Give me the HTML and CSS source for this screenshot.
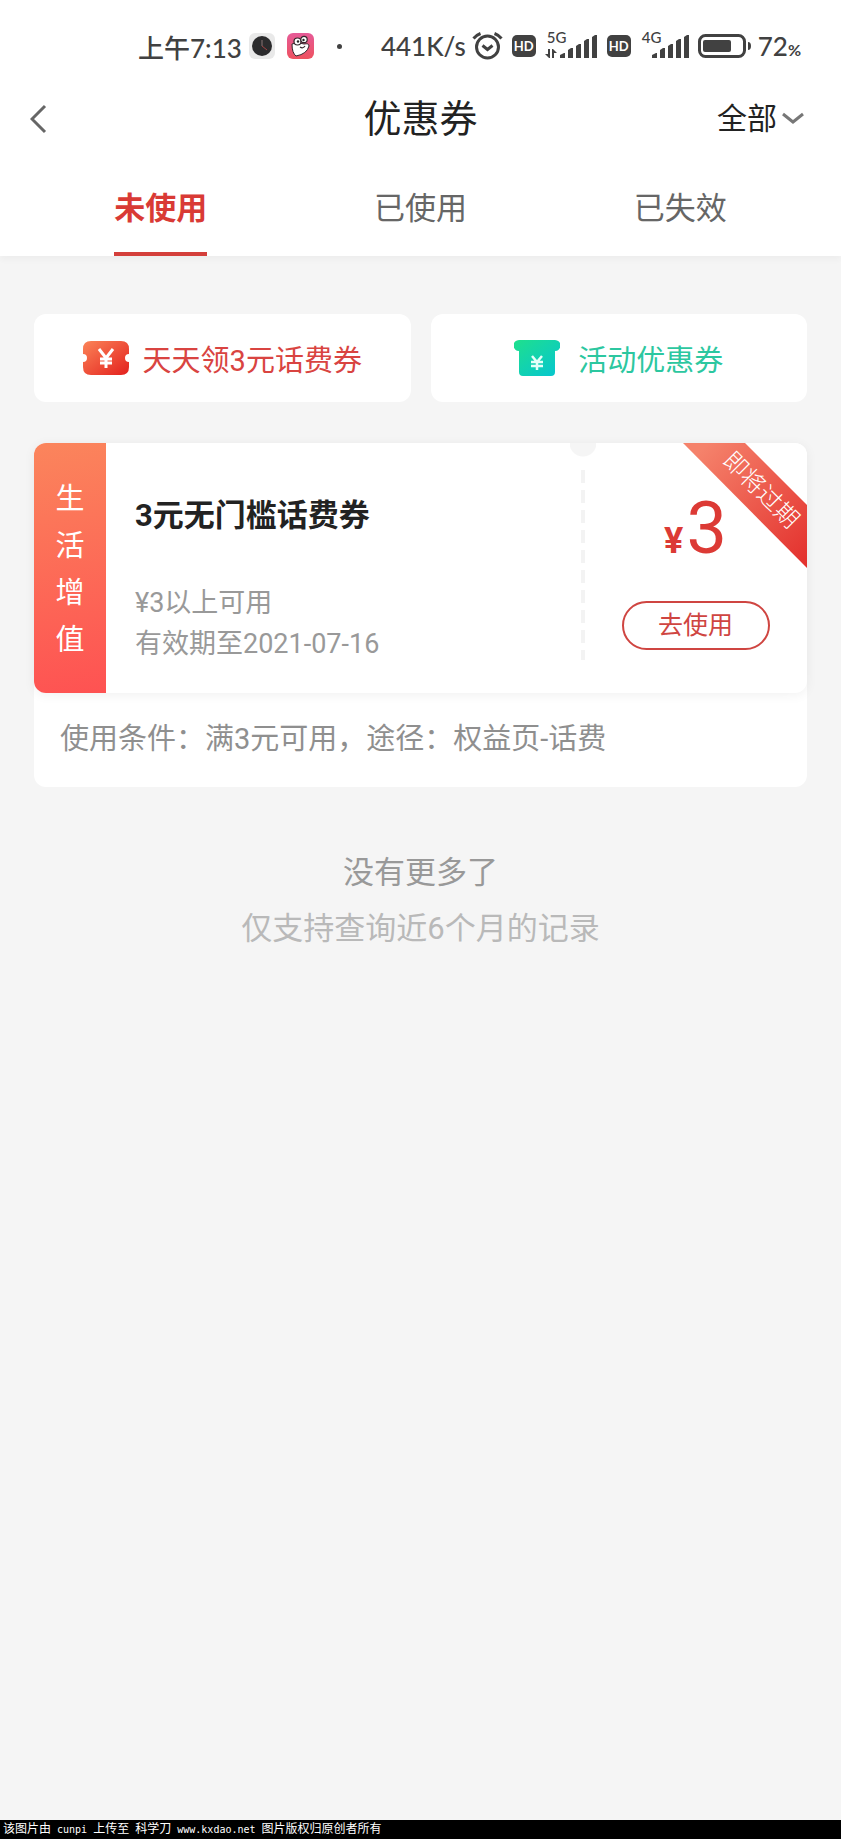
FILE: index.html
```html
<!DOCTYPE html>
<html lang="zh-CN">
<head>
<meta charset="utf-8">
<meta name="viewport" content="width=device-width, initial-scale=1">
<title>优惠券</title>
<link rel="stylesheet" href="styles.css">
</head>
<body>
<div class="page">
  <div class="status">
    <div class="status-group status-left">
      <span class="status-time">上午7:13</span>
      <svg class="app-icon" width="26" height="26" viewBox="0 0 26 26" aria-hidden="true">
        <rect width="26" height="26" rx="6" fill="#e9e9e9"/>
        <circle cx="13" cy="13" r="10" fill="#2b2b2d"/>
        <path d="M13 7v6" stroke="#8a7777" stroke-width="1"/>
        <path d="M13 13l5 4" stroke="#a04444" stroke-width="1"/>
      </svg>
      <svg class="app-icon pink" width="27" height="26" viewBox="0 0 27 26" aria-hidden="true">
        <defs><linearGradient id="pink" x1="0" y1="0" x2="0" y2="1"><stop offset="0" stop-color="#e65a97"/><stop offset="1" stop-color="#ee5260"/></linearGradient></defs>
        <rect width="27" height="26" rx="6" fill="url(#pink)"/>
        <path d="M5 11Q5 20 9 23Q20 21 22 13Q22 10 17 11Q10 8 5 11Z" fill="#fff" stroke="#33272c" stroke-width="1"/>
        <circle cx="10.500" cy="8.500" r="3.500" fill="#fff" stroke="#33272c" stroke-width="1.200"/>
        <circle cx="17" cy="6.500" r="3.200" fill="#fff" stroke="#33272c" stroke-width="1.200"/>
        <circle cx="11" cy="8.500" r="1.200" fill="#222"/><circle cx="16.500" cy="7" r="1.200" fill="#222"/>
        <path d="M13 14q3 2 5-1" fill="none" stroke="#33272c" stroke-width="1.200"/>
      </svg>
      <span class="status-dot"></span>
    </div>
    <div class="status-group">
      <span class="status-speed">441K/s</span>
      <svg width="31" height="28" viewBox="0 0 31 28" fill="none" stroke="#414141" aria-hidden="true">
        <circle cx="15.500" cy="15" r="11" stroke-width="3"/>
        <path d="M10.500 13.500l5 4 5-4" stroke-width="3"/>
        <path d="M1.500 6.500Q4.500 3 8.500 1.500M29.500 6.500Q26.500 3 22.500 1.500" stroke-width="3"/>
      </svg>
      <span class="hd">HD</span>
      <span class="signal">
        <span class="signal-net">5G</span>
        <svg width="53" height="26" viewBox="0 0 53 26" fill="#414141" aria-hidden="true">
          <path d="M3 16h2v9H4L0 21h3zM7 16h1l4 4H9v5H7z"/>
          <path d="M15 25v-3l4-2h1v5zM23 25v-8l3-2h2v10zM31 25V13l3-2h2v14zM39 25V8l3-2h2v19zM47 25V4l3-2h2v23z"/>
        </svg>
      </span>
      <span class="hd">HD</span>
      <span class="signal">
        <span class="signal-net">4G</span>
        <svg width="49" height="26" viewBox="0 0 49 26" fill="#414141" aria-hidden="true">
          <path d="M12 25v-3l4-2h1v5zM20 25v-8l3-2h2v10zM28 25V13l3-2h2v14zM36 25V8l3-2h2v19zM44 25V4l3-2h2v23z"/>
        </svg>
      </span>
      <svg class="battery" width="54" height="24" viewBox="0 0 54 24" aria-hidden="true">
        <rect x="1.500" y="1.500" width="45" height="21" rx="6" fill="none" stroke="#414141" stroke-width="3"/>
        <rect x="5" y="6" width="28" height="12" rx="2" fill="#414141"/>
        <path d="M50 8q3 0 3 4t-3 4z" fill="#414141"/>
      </svg>
      <span class="status-percent">72<small>%</small></span>
    </div>
  </div>

  <header class="titlebar">
    <button class="back" type="button" aria-label="返回">
      <svg width="17" height="30" viewBox="0 0 17 30" fill="none" stroke="#666" stroke-width="3" aria-hidden="true"><path d="M15 2L2 15l13 13"/></svg>
    </button>
    <h1 class="title">优惠券</h1>
    <label class="filter">
      <select class="filter-select" aria-label="筛选">
        <option>全部</option>
      </select>
      <svg width="22" height="13" viewBox="0 0 22 13" fill="none" stroke="#777" stroke-width="3" aria-hidden="true"><path d="M1 2l10 8 10-8"/></svg>
    </label>
  </header>

  <nav class="tabs">
    <button class="tab active" type="button">未使用</button>
    <button class="tab" type="button">已使用</button>
    <button class="tab" type="button">已失效</button>
  </nav>

  <main class="content">
    <div class="links">
      <a class="link link-red" href="#daily">
        <svg width="46" height="34" viewBox="0 0 46 34" aria-hidden="true">
          <defs><linearGradient id="red" x1="0" y1="0" x2="1" y2="1"><stop offset="0" stop-color="#fb8458"/><stop offset="1" stop-color="#e3201d"/></linearGradient></defs>
          <path d="M8 0h30q8 0 8 8v5a4 4 0 0 0 0 8v5q0 8-8 8H8q-8 0-8-8v-5a4 4 0 0 0 0-8V8q0-8 8-8z" fill="url(#red)"/>
          <path d="M16 8l7 9 7-9M23 17v10M17 18h12M17 22h12" fill="none" stroke="#fff" stroke-width="3"/>
        </svg>
        天天领3元话费券
      </a>
      <a class="link link-green" href="#activity">
        <svg width="46" height="36" viewBox="0 0 46 36" aria-hidden="true">
          <defs><linearGradient id="green" x1="0" y1="0" x2="1" y2="1"><stop offset="0" stop-color="#1fe08c"/><stop offset="1" stop-color="#05c5d2"/></linearGradient></defs>
          <path d="M5 0h36a5 5 0 0 1 0 11v21q0 4-4 4H9q-4 0-4-4V11A5 5 0 0 1 5 0z" fill="url(#green)"/>
          <path d="M18 16l5 6 5-6M23 22v8M17 22h12M17 26h12" fill="none" stroke="#e4fff8" stroke-width="2.500"/>
        </svg>
        活动优惠券
      </a>
    </div>

    <article class="coupon">
      <div class="coupon-card">
        <div class="coupon-type"><span>生</span><span>活</span><span>增</span><span>值</span></div>
        <div class="coupon-info">
          <h2 class="coupon-name">3元无门槛话费券</h2>
          <p class="coupon-rule">¥3以上可用</p>
          <p class="coupon-rule">有效期至2021-07-16</p>
        </div>
        <div class="perforation"></div>
        <div class="coupon-side">
          <p class="price"><span class="price-unit">¥</span>3</p>
          <button class="use" type="button">去使用</button>
        </div>
        <svg class="ribbon" width="124" height="125" viewBox="0 0 124 125">
          <defs><linearGradient id="ribbon" x1="0" y1="0" x2="1" y2="1"><stop offset="0.100" stop-color="#f5826b"/><stop offset="1" stop-color="#e32f2c"/></linearGradient></defs>
          <path d="M0 0h62l62 62v63z" fill="url(#ribbon)"/>
          <text class="ribbon-text" x="78" y="47" transform="rotate(45 78 47)" text-anchor="middle" dominant-baseline="central">即将过期</text>
        </svg>
      </div>
      <p class="coupon-note">使用条件：满3元可用，途径：权益页-话费</p>
    </article>

    <p class="end">没有更多了</p>
    <p class="end end-hint">仅支持查询近6个月的记录</p>
  </main>

  <footer class="credit">该图片由<span> cunpi </span>上传至<span> </span>科学刀<span> www.kxdao.net </span>图片版权归原创者所有</footer>
</div>
</body>
</html>
```
FILE: styles.css
```css
* { box-sizing: border-box; }

body {
  margin: 0;
  background: #f5f5f5;
  color: #222;
  font-family: Roboto, "Noto Sans CJK SC", sans-serif;
}

h1, h2, p { margin: 0; font-weight: 400; }

button, select {
  margin: 0;
  padding: 0;
  border: 0;
  background: none;
  color: inherit;
  font: inherit;
}

svg { display: block; flex: none; }

.page {
  display: flex;
  flex-direction: column;
  min-height: 100vh;
}

/* Status bar */
.status {
  display: flex;
  justify-content: space-between;
  height: 80px;
  padding: 12px 40px 0 138px;
  background: #fff;
  color: #414141;
  font-family: Lato, "Noto Sans CJK SC", sans-serif;
  font-weight: 500;
  white-space: nowrap;
}

.status-group { display: flex; align-items: center; }
.status-time { font-size: 26px; }
.app-icon { margin-left: 7px; }
.app-icon.pink { margin-left: 12px; }

.status-dot {
  width: 5px;
  height: 5px;
  margin-left: 23px;
  border-radius: 50%;
  background: #414141;
}

.status-speed { margin-right: 6px; font-size: 26px; }

.hd {
  width: 24px;
  margin-left: 9px;
  border-radius: 5px;
  background: #414141;
  color: #fff;
  font-size: 13px;
  font-weight: 700;
  line-height: 22px;
  text-align: center;
}

.signal { position: relative; margin-left: 9px; }
.signal-net { position: absolute; top: -5px; left: 2px; font-size: 15px; line-height: 18px; }
.battery { margin-left: 9px; }
.status-percent { margin-left: 6px; font-size: 26px; }
.status-percent small { font-size: 16px; font-weight: 700; }

/* Title bar */
.titlebar {
  display: grid;
  grid-template-columns: 1fr auto 1fr;
  align-items: center;
  height: 77px;
  padding: 0 37px 0 30px;
  background: #fff;
}

.back { justify-self: start; }
.title { padding-left: 7px; font-size: 38px; line-height: 48px; }

.filter {
  display: flex;
  align-items: center;
  justify-self: end;
  gap: 5px;
}

.filter-select { width: 60px; appearance: none; font-size: 30px; line-height: 40px; }

/* Tabs */
.tabs {
  display: flex;
  justify-content: space-around;
  height: 99px;
  padding: 0 31px;
  background: #fff;
  box-shadow: 0 4px 6px rgba(0, 0, 0, 0.03);
}

.tab {
  padding: 8px 0 0;
  border-bottom: 4px solid transparent;
  color: #666;
  font-size: 31px;
  line-height: 40px;
}

.tab.active { border-color: #d43f3b; color: #d93a35; font-weight: 700; }

/* Content */
.content { flex: 1; padding: 58px 34px 0; }

.links { display: flex; gap: 20px; }

.link {
  display: flex;
  flex: 1;
  align-items: center;
  justify-content: center;
  height: 88px;
  border-radius: 12px;
  background: #fff;
  font-size: 29px;
  text-decoration: none;
}

.link-red { gap: 14px; color: #d94441; }
.link-green { gap: 18px; color: #2cc7a0; }

/* Coupon */
.coupon {
  margin-top: 41px;
  border-radius: 12px;
  background: #fff;
}

.coupon-card {
  position: relative;
  display: flex;
  height: 250px;
  overflow: hidden;
  border-radius: 12px;
  background: #fff;
  box-shadow: 0 2px 12px rgba(0, 0, 0, 0.06);
}

.coupon-type {
  display: flex;
  flex-direction: column;
  justify-content: center;
  width: 72px;
  padding-top: 3px;
  background: linear-gradient(170deg, #fb855c, #fe5252);
  color: #fff;
  font-size: 29px;
  line-height: 47px;
  text-align: center;
}

.coupon-info { flex: 1; padding: 53px 0 0 29px; }
.coupon-name { margin-bottom: 47px; font-size: 31px; font-weight: 700; line-height: 40px; }
.coupon-rule { color: #999; font-size: 27px; line-height: 41px; }

.perforation {
  width: 26px;
  background:
    radial-gradient(circle at 13px 0, #f5f5f5 13px, transparent 14px) no-repeat,
    repeating-linear-gradient(#f3f3f3 0 13px, transparent 13px 20px) 11px 27px / 4px 190px no-repeat;
}

.coupon-side {
  display: flex;
  flex-direction: column;
  align-items: center;
  width: 211px;
  padding: 44px 12px 0 0;
}

.price { color: #dc3a35; font-size: 72px; line-height: 84px; }
.price-unit { margin-right: 3px; font-size: 36px; font-weight: 700; }

.use {
  width: 148px;
  height: 49px;
  margin-top: 30px;
  border: 2px solid #cf4541;
  border-radius: 25px;
  color: #cf4541;
  font-size: 25px;
  line-height: 40px;
}

.price, .use { flex: none; }
.price { height: 84px; }

.ribbon { position: absolute; top: 0; right: 0; }
.ribbon-text { fill: #fff; font-size: 24px; font-weight: 300; }

.coupon-note {
  padding: 24px 26px 26px;
  color: #8f8f8f;
  font-size: 29px;
  line-height: 44px;
}

.end {
  padding-top: 58px;
  color: #999;
  font-size: 31px;
  line-height: 56px;
  text-align: center;
}

.end-hint { padding-top: 0; color: #b9b9b9; }

.credit {
  padding-left: 3px;
  background: #000;
  color: #fff;
  font-family: "DejaVu Sans Mono", "Noto Sans CJK SC", monospace;
  font-size: 12px;
  line-height: 18px;
  white-space: nowrap;
}

.credit span { font-size: 10px; }
```
